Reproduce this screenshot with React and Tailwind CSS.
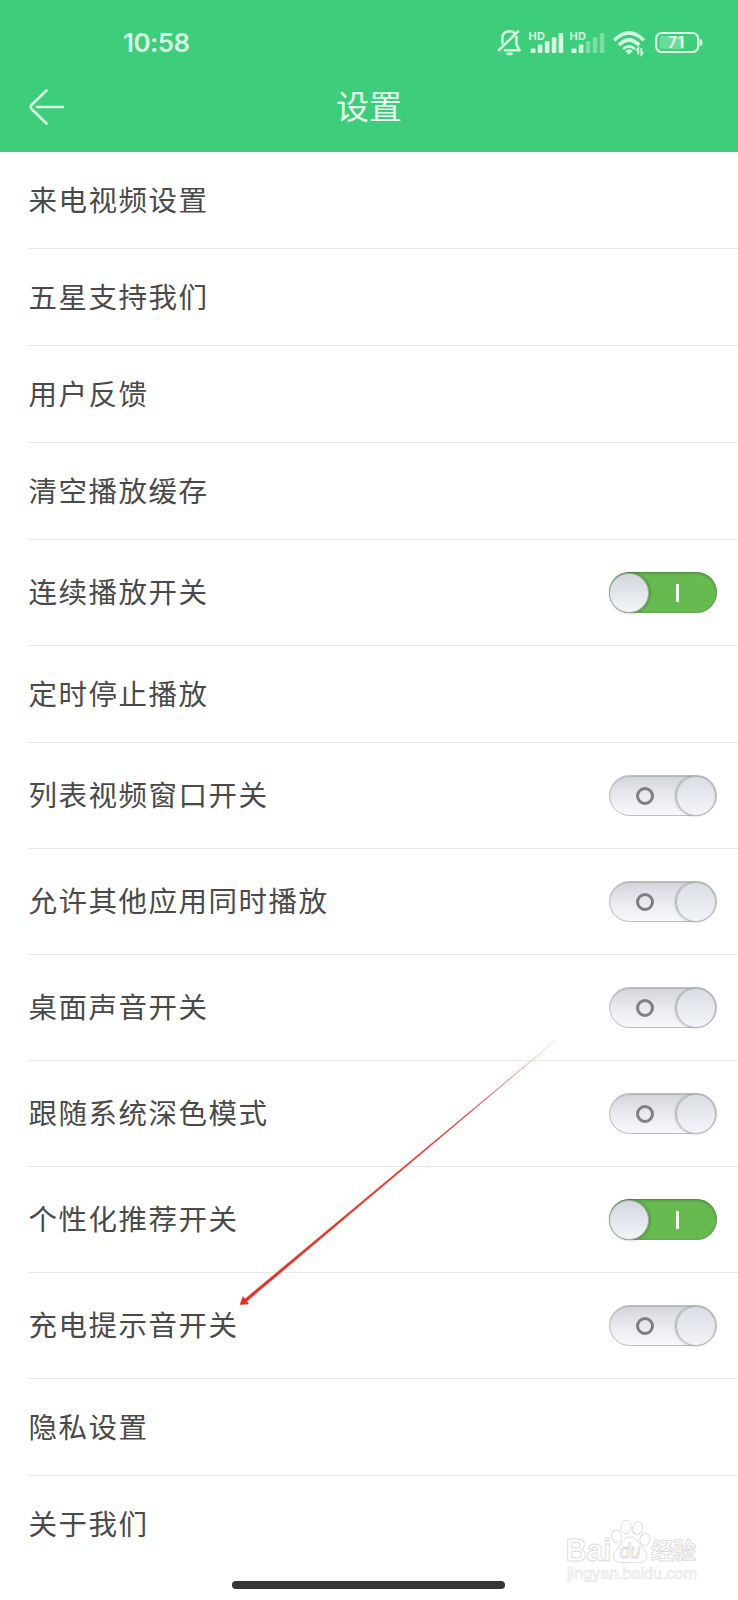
const rows = [
  { label: '来电视频设置' },
  { label: '五星支持我们' },
  { label: '用户反馈' },
  { label: '清空播放缓存' },
  { label: '连续播放开关', toggle: 'on' },
  { label: '定时停止播放' },
  { label: '列表视频窗口开关', toggle: 'off' },
  { label: '允许其他应用同时播放', toggle: 'off' },
  { label: '桌面声音开关', toggle: 'off' },
  { label: '跟随系统深色模式', toggle: 'off' },
  { label: '个性化推荐开关', toggle: 'on' },
  { label: '充电提示音开关', toggle: 'off' },
  { label: '隐私设置' },
  { label: '关于我们', last: true },
];

function Toggle({ on }) {
  if (on) {
    return (
      <div role="switch" aria-checked="true" className="flex h-[41px] w-[108px] items-center rounded-full bg-[#67ba50] shadow-[inset_0_1px_3px_rgba(40,80,30,0.5),inset_0_0_0_1px_rgba(120,160,110,0.4)]">
        <div className="size-[40px] rounded-full border border-[#a9abaf] bg-linear-to-b from-[#d3d6dc] to-[#f3f5fa] shadow-[1px_0_3px_rgba(30,70,20,0.45)]" />
        <div className="ml-[27px] h-[18px] w-[3px] bg-[#f1faef]" />
      </div>
    );
  }
  return (
    <div role="switch" aria-checked="false" className="flex h-[41px] w-[108px] items-center justify-between rounded-full border border-[#bcbec1] bg-linear-to-b from-[#d3d5da] via-[#e8eaef] to-[#f7f8fa] shadow-[inset_0_1px_1px_rgba(80,80,85,0.25)]">
      <div className="ml-[26px] size-[18px] rounded-full border-3 border-[#7e7f82]" />
      <div className="size-[40px] rounded-full border border-[#b4b6ba] bg-linear-to-b from-[#dadde3] to-[#f3f5f9] shadow-[-1px_0_2px_rgba(80,80,90,0.4)]" />
    </div>
  );
}

function StatusIcons() {
  return (
    <svg width="240" height="60" viewBox="0 0 240 60" fill="none" stroke="#d5fbe3" className="block">
      <g strokeWidth="2.6" strokeLinecap="round" strokeLinejoin="round">
        <path d="M19 35 38 16.500" />
        <path d="M22.300 28V23.500C22.300 18.500 25 16.200 29.500 16.200C31.500 16.200 33 16.700 34.300 17.700M36.500 22V29.500L39.500 35.300H25" />
        <path d="M27.500 38.800h4" strokeWidth="2.800" />
      </g>
      <g fill="#d5fbe3" stroke="none">
        <text x="48.500" y="24.800" fontSize="11" fontWeight="700" textLength="16.500" className="font-['Inter',sans-serif]">HD</text>
        <text x="89.500" y="24.800" fontSize="11" fontWeight="700" textLength="16.500" className="font-['Inter',sans-serif]">HD</text>
        <rect x="50.500" y="33.500" width="5" height="4.500" rx="1" />
        <rect x="57.800" y="29.500" width="4.600" height="8.500" rx="1" />
        <rect x="64.800" y="26" width="4.600" height="12" rx="1" />
        <rect x="71.800" y="22" width="4.600" height="16" rx="1" />
        <rect x="78.600" y="18" width="4.600" height="20" rx="1" />
        <rect x="91.500" y="33.500" width="5" height="4.500" rx="1" />
        <rect x="98.800" y="29.500" width="4.600" height="8.500" rx="1" />
        <g opacity=".4">
          <rect x="105.800" y="26" width="4.600" height="12" rx="1" />
          <rect x="112.800" y="22" width="4.600" height="16" rx="1" />
          <rect x="119.800" y="18" width="4.600" height="20" rx="1" />
        </g>
      </g>
      <g strokeWidth="3.600">
        <path d="M134.200 25.200Q149 10.500 163.800 25.200" />
        <path d="M138.900 30Q149 20 159.100 30" />
        <path d="M143 34.200Q149 28.500 155 34.200" strokeWidth="2.500" />
      </g>
      <path d="M145.200 36Q149 32.500 152.800 36L149 39.500Z" fill="#d5fbe3" stroke="none" />
      <path d="M158.300 39.500V33L156.300 35.500M161.300 33V39.500L163.300 37" strokeWidth="1.800" />
      <rect x="176.200" y="18" width="42" height="19" rx="5.500" strokeWidth="2.200" />
      <rect x="179.500" y="21" width="25" height="13" rx="3" fill="#d5fbe3" fillOpacity=".3" stroke="none" />
      <path d="M219.800 24q2.600 0 2.600 3.500t-2.600 3.500Z" fill="#d5fbe3" stroke="none" />
      <text x="188" y="33" fontSize="15.500" fontWeight="600" textLength="16" fill="#e6fff0" stroke="none" className="font-['Inter',sans-serif]">71</text>
    </svg>
  );
}

function Watermark() {
  return (
    <svg width="140" height="70" viewBox="0 0 140 70" className="absolute top-[1515px] left-[560px]" fill="#fff" stroke="#dedede" strokeWidth="1">
      <text x="5.500" y="46" fontSize="31" textLength="46" lengthAdjust="spacingAndGlyphs" fontWeight="700" className="font-['Liberation_Sans',sans-serif]">Bai</text>
      <ellipse cx="56.500" cy="21.500" rx="5" ry="6.500" transform="rotate(-10 56.500 21.500)" />
      <ellipse cx="66" cy="12" rx="5" ry="6.800" />
      <ellipse cx="77.500" cy="13" rx="5" ry="6.500" transform="rotate(15 77.500 13)" />
      <ellipse cx="85" cy="24.500" rx="5" ry="6" transform="rotate(15 85 24.500)" />
      <path d="M70 22C77 22 78 28 83 33C90 40 87 47 79 47.500H61C52 47 51 40 57 34C62 29 63 22 70 22Z" />
      <text x="59.500" y="43" fontSize="20" textLength="21" lengthAdjust="spacingAndGlyphs" fontStyle="italic" className="font-['Liberation_Sans',sans-serif]">du</text>
      <text x="91" y="44" fontSize="23" fontWeight="700" textLength="45" className="font-['Noto_Sans_CJK_SC',sans-serif]">经验</text>
      <text x="7" y="64" fontSize="16" textLength="130" lengthAdjust="spacingAndGlyphs" stroke="#e6e6e6" strokeWidth=".7" className="font-['Liberation_Sans',sans-serif]">jingyan.baidu.com</text>
    </svg>
  );
}

export default function App() {
  return (
    <div className="relative flex h-[1600px] w-[738px] flex-col overflow-hidden bg-white font-['Noto_Sans_CJK_SC',sans-serif]">
      <header className="flex h-[152px] shrink-0 flex-col bg-[#3ecd7a] text-[#e6fdef]">
        <div className="flex h-[75px] items-start justify-between pt-[15px] pr-[18px] pl-[123px]">
          <span className="pt-[9px] font-['Inter',sans-serif] text-[26px] leading-[38px] font-semibold tracking-[-0.6px] text-[#d5fbe3]">10:58</span>
          <StatusIcons />
        </div>
        <div className="grid h-[64px] grid-cols-[100px_1fr_100px] items-center">
          <svg width="36" height="36" viewBox="0 0 36 36" fill="none" stroke="#d5fbe3" strokeWidth="2.600" strokeLinecap="round" className="ml-[29px]">
            <path d="M17.500 1.500 3 15.500Q.500 18 3 20.500L17.500 34.500" />
            <path d="M8 18H34" />
          </svg>
          <h1 className="pb-[4px] text-center text-[33px] leading-[48px] font-normal">设置</h1>
        </div>
      </header>
      <ul className="flex flex-col pl-7">
        {rows.map((row) => (
          <li
            key={row.label}
            className={`flex shrink-0 items-center justify-between pr-[21px] ${row.toggle ? 'h-[106px]' : 'h-[97px]'} ${row.last ? '' : 'border-b border-[#e8e8e8]'}`}
          >
            <span className="pb-[3px] pl-[0.6px] text-[28.5px] leading-[42px] tracking-[1.5px] text-[#4a4a4a]">{row.label}</span>
            {row.toggle && <Toggle on={row.toggle === 'on'} />}
          </li>
        ))}
      </ul>
      <svg width="330" height="276" viewBox="0 0 330 276" className="absolute top-[1034px] left-[234px]">
        <defs>
          <linearGradient id="tail" x1="323" y1="5" x2="6" y2="270" gradientUnits="userSpaceOnUse">
            <stop offset="0" stopColor="#e03024" stopOpacity="0.1" />
            <stop offset=".28" stopColor="#e03024" stopOpacity="0.9" />
            <stop offset="1" stopColor="#e03024" />
          </linearGradient>
        </defs>
        <path d="M322 6 11 265 9 262.500 6 270.500 14.500 270 12.800 267.200Z" fill="url(#tail)" stroke="url(#tail)" strokeWidth=".5" strokeLinejoin="round" />
      </svg>
      <Watermark />
      <div className="absolute top-[1581px] left-[232px] h-[8px] w-[273px] rounded-full bg-[#363636]" />
    </div>
  );
}
